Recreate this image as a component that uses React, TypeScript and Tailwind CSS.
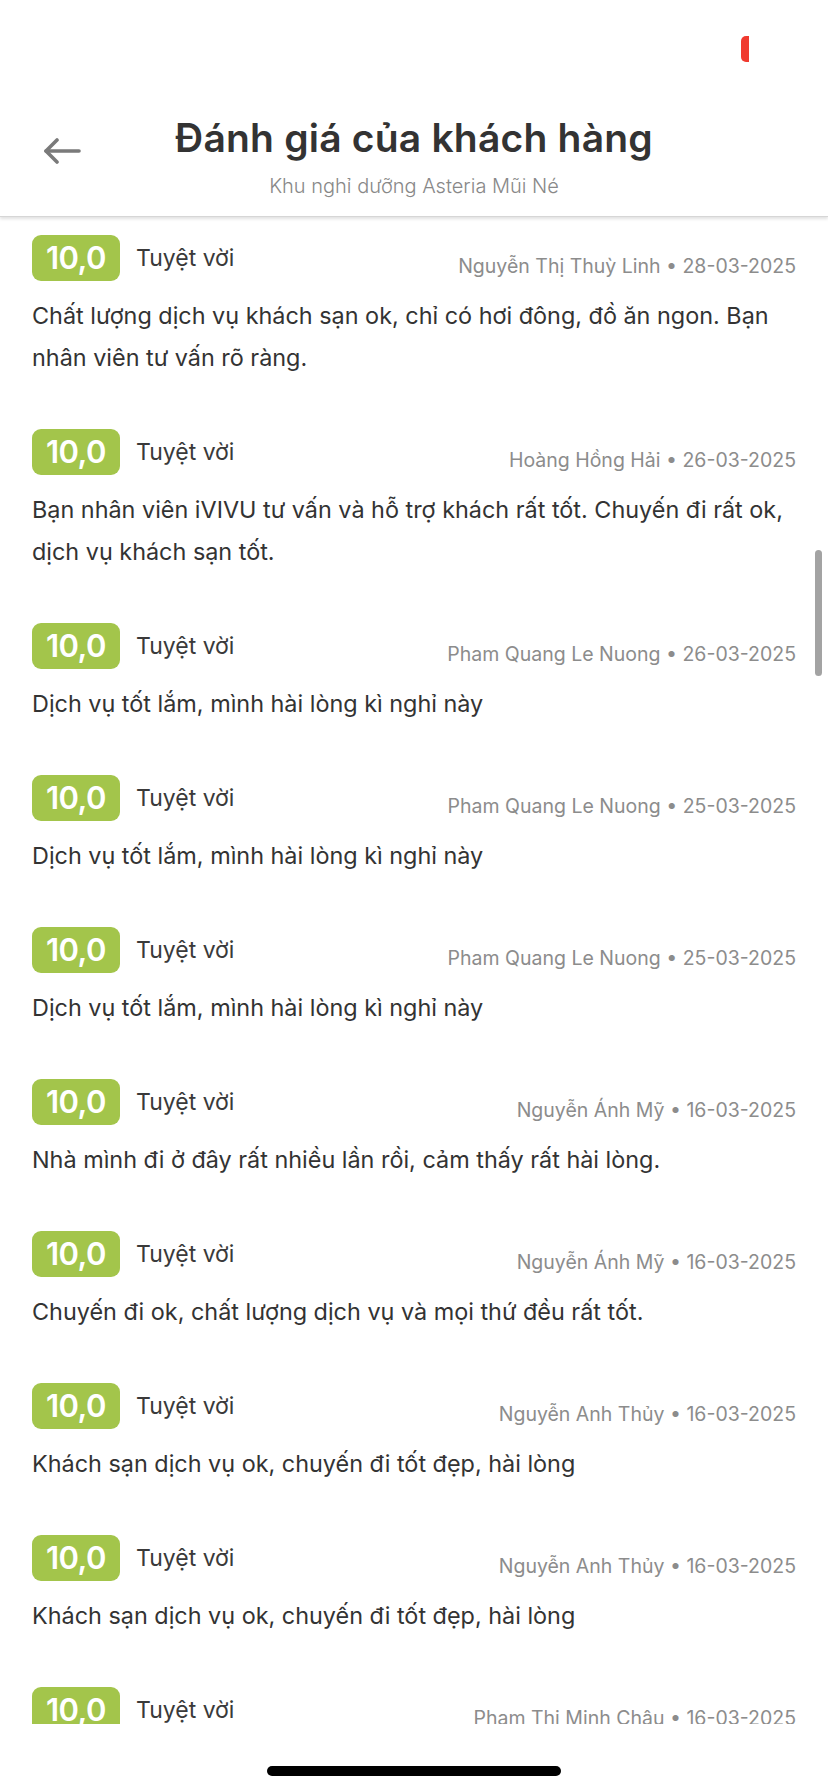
const reviews = [
  {
    author: "Nguyễn Thị Thuỳ Linh",
    date: "28-03-2025",
    lines: ["Chất lượng dịch vụ khách sạn ok, chỉ có hơi đông, đồ ăn ngon. Bạn", "nhân viên tư vấn rõ ràng."],
  },
  {
    author: "Hoàng Hồng Hải",
    date: "26-03-2025",
    lines: ["Bạn nhân viên iVIVU tư vấn và hỗ trợ khách rất tốt. Chuyến đi rất ok,", "dịch vụ khách sạn tốt."],
  },
  { author: "Pham Quang Le Nuong", date: "26-03-2025", lines: ["Dịch vụ tốt lắm, mình hài lòng kì nghỉ này"] },
  { author: "Pham Quang Le Nuong", date: "25-03-2025", lines: ["Dịch vụ tốt lắm, mình hài lòng kì nghỉ này"] },
  { author: "Pham Quang Le Nuong", date: "25-03-2025", lines: ["Dịch vụ tốt lắm, mình hài lòng kì nghỉ này"] },
  {
    author: "Nguyễn Ánh Mỹ",
    date: "16-03-2025",
    lines: ["Nhà mình đi ở đây rất nhiều lần rồi, cảm thấy rất hài lòng."],
  },
  {
    author: "Nguyễn Ánh Mỹ",
    date: "16-03-2025",
    lines: ["Chuyến đi ok, chất lượng dịch vụ và mọi thứ đều rất tốt."],
  },
  { author: "Nguyễn Anh Thủy", date: "16-03-2025", lines: ["Khách sạn dịch vụ ok, chuyến đi tốt đẹp, hài lòng"] },
  { author: "Nguyễn Anh Thủy", date: "16-03-2025", lines: ["Khách sạn dịch vụ ok, chuyến đi tốt đẹp, hài lòng"] },
  { author: "Pham Thi Minh Châu", date: "16-03-2025", lines: ["Khách sạn đẹp, dịch vụ tốt."] },
];

function ReviewItem({ review }: { review: (typeof reviews)[number] }) {
  return (
    <div className="pb-[50px]">
      <div className="flex items-start">
        <div className="flex h-[46px] w-[88px] items-center justify-center rounded-[9px] bg-[#a3c54b] text-[31px] font-semibold tracking-[-0.5px] text-white">
          10,0
        </div>
        <span className="ml-[16px] mt-[9px] text-[23px] leading-[28px] text-[#3a3a3a]">Tuyệt vời</span>
        <span className="ml-auto mt-[17px] text-[19.5px] leading-[28px] text-[#8c8c8c]">
          {review.author} • {review.date}
        </span>
      </div>
      <div className="mt-[14px] text-[23.4px] leading-[42px] text-[#333333]">
        {review.lines.map((line) => (
          <p key={line} className="whitespace-nowrap">
            {line}
          </p>
        ))}
      </div>
    </div>
  );
}

export default function App() {
  return (
    <div
      className="relative flex h-[1792px] w-[828px] flex-col overflow-hidden bg-white"
      style={{ fontFamily: "Inter, 'Noto Sans', sans-serif" }}
    >
      <header className="relative z-10 h-[217px] shrink-0 border-b border-[#d6d6d6] bg-white shadow-[0_2px_3px_rgba(0,0,0,0.12)]">
        <div className="flex h-[98px] justify-end pr-[79px] pt-[36px]">
          <div className="h-[26px] w-[8px] rounded-l-[5px] bg-[#f03a2f]" />
        </div>
        <div className="relative flex flex-col items-center pt-[18px]">
          <svg
            className="absolute left-[43px] top-[40px]"
            width="38"
            height="26"
            viewBox="0 0 38 26"
            fill="none"
            stroke="#7a7a7a"
            strokeWidth="3.6"
            strokeLinecap="round"
            strokeLinejoin="round"
          >
            <path d="M36 13H3" />
            <path d="M14 2L3 13L14 24" />
          </svg>
          <h1 className="text-[39px] font-semibold leading-[44px] tracking-[0.2px] text-[#333333]">
            Đánh giá của khách hàng
          </h1>
          <p className="mt-[14px] text-[20px] font-light leading-[24px] text-[#888888]">Khu nghỉ dưỡng Asteria Mũi Né</p>
        </div>
      </header>

      <main className="relative flex-1 overflow-hidden px-[32px] pt-[18px]">
        {reviews.map((r, i) => (
          <ReviewItem key={i} review={r} />
        ))}
        <div className="absolute right-[6px] top-[333px] h-[126px] w-[7px] rounded-full bg-[#a3a3a3]" />
      </main>

      <div className="flex h-[68px] shrink-0 items-start justify-center bg-white pt-[42px]">
        <div className="h-[10px] w-[294px] rounded-full bg-black" />
      </div>
    </div>
  );
}
